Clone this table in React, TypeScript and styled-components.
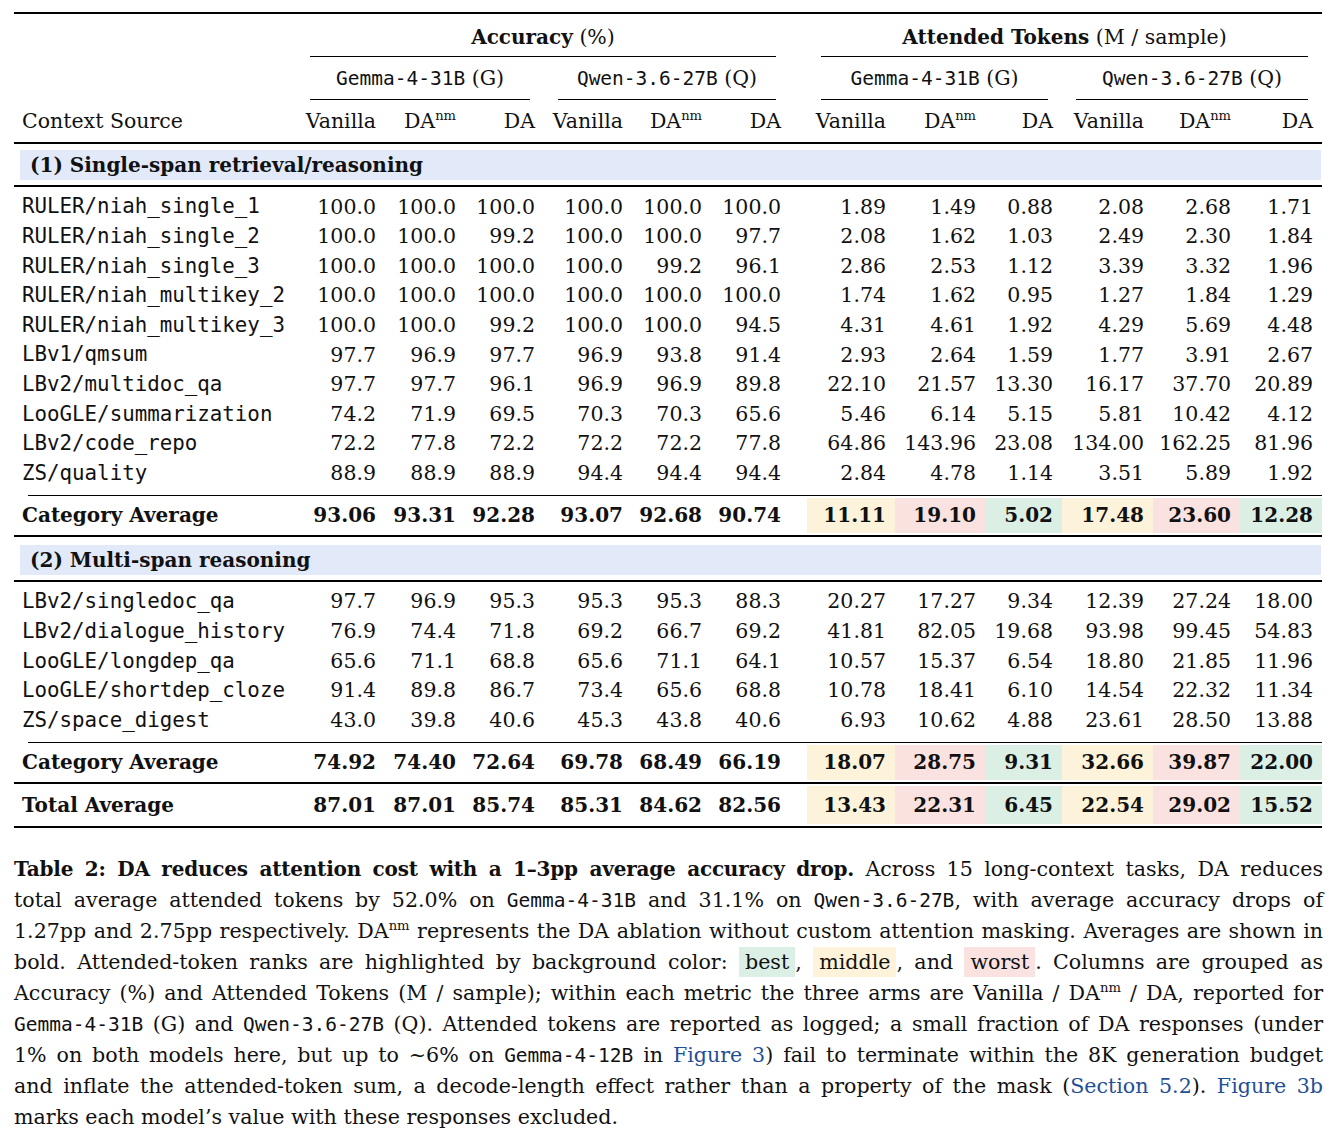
import styled, { createGlobalStyle, css } from "styled-components";

type Tone = "best" | "mid" | "worst";

const tones: Record<Tone, string> = {
  best: "#dcefe5",
  mid: "#fdf3da",
  worst: "#fae2e0",
};

// order of the attended-token ranks: Vanilla / DA^nm / DA, twice
const ranks: Tone[] = ["mid", "worst", "best", "mid", "worst", "best"];

const colWidths = [282, 89, 80, 79, 88, 79, 79, 17, 88, 90, 77, 91, 87, 82];

type Row = { label: string; acc: string[]; att: string[] };

const singleSpan: Row[] = [
  { label: "RULER/niah_single_1", acc: ["100.0", "100.0", "100.0", "100.0", "100.0", "100.0"], att: ["1.89", "1.49", "0.88", "2.08", "2.68", "1.71"] },
  { label: "RULER/niah_single_2", acc: ["100.0", "100.0", "99.2", "100.0", "100.0", "97.7"], att: ["2.08", "1.62", "1.03", "2.49", "2.30", "1.84"] },
  { label: "RULER/niah_single_3", acc: ["100.0", "100.0", "100.0", "100.0", "99.2", "96.1"], att: ["2.86", "2.53", "1.12", "3.39", "3.32", "1.96"] },
  { label: "RULER/niah_multikey_2", acc: ["100.0", "100.0", "100.0", "100.0", "100.0", "100.0"], att: ["1.74", "1.62", "0.95", "1.27", "1.84", "1.29"] },
  { label: "RULER/niah_multikey_3", acc: ["100.0", "100.0", "99.2", "100.0", "100.0", "94.5"], att: ["4.31", "4.61", "1.92", "4.29", "5.69", "4.48"] },
  { label: "LBv1/qmsum", acc: ["97.7", "96.9", "97.7", "96.9", "93.8", "91.4"], att: ["2.93", "2.64", "1.59", "1.77", "3.91", "2.67"] },
  { label: "LBv2/multidoc_qa", acc: ["97.7", "97.7", "96.1", "96.9", "96.9", "89.8"], att: ["22.10", "21.57", "13.30", "16.17", "37.70", "20.89"] },
  { label: "LooGLE/summarization", acc: ["74.2", "71.9", "69.5", "70.3", "70.3", "65.6"], att: ["5.46", "6.14", "5.15", "5.81", "10.42", "4.12"] },
  { label: "LBv2/code_repo", acc: ["72.2", "77.8", "72.2", "72.2", "72.2", "77.8"], att: ["64.86", "143.96", "23.08", "134.00", "162.25", "81.96"] },
  { label: "ZS/quality", acc: ["88.9", "88.9", "88.9", "94.4", "94.4", "94.4"], att: ["2.84", "4.78", "1.14", "3.51", "5.89", "1.92"] },
];

const multiSpan: Row[] = [
  { label: "LBv2/singledoc_qa", acc: ["97.7", "96.9", "95.3", "95.3", "95.3", "88.3"], att: ["20.27", "17.27", "9.34", "12.39", "27.24", "18.00"] },
  { label: "LBv2/dialogue_history", acc: ["76.9", "74.4", "71.8", "69.2", "66.7", "69.2"], att: ["41.81", "82.05", "19.68", "93.98", "99.45", "54.83"] },
  { label: "LooGLE/longdep_qa", acc: ["65.6", "71.1", "68.8", "65.6", "71.1", "64.1"], att: ["10.57", "15.37", "6.54", "18.80", "21.85", "11.96"] },
  { label: "LooGLE/shortdep_cloze", acc: ["91.4", "89.8", "86.7", "73.4", "65.6", "68.8"], att: ["10.78", "18.41", "6.10", "14.54", "22.32", "11.34"] },
  { label: "ZS/space_digest", acc: ["43.0", "39.8", "40.6", "45.3", "43.8", "40.6"], att: ["6.93", "10.62", "4.88", "23.61", "28.50", "13.88"] },
];

const catAvg1: Row = { label: "Category Average", acc: ["93.06", "93.31", "92.28", "93.07", "92.68", "90.74"], att: ["11.11", "19.10", "5.02", "17.48", "23.60", "12.28"] };
const catAvg2: Row = { label: "Category Average", acc: ["74.92", "74.40", "72.64", "69.78", "68.49", "66.19"], att: ["18.07", "28.75", "9.31", "32.66", "39.87", "22.00"] };
const totalAvg: Row = { label: "Total Average", acc: ["87.01", "87.01", "85.74", "85.31", "84.62", "82.56"], att: ["13.43", "22.31", "6.45", "22.54", "29.02", "15.52"] };

const GlobalStyle = createGlobalStyle`
  html, body {
    margin: 0;
    padding: 0;
    background: #fff;
  }
  body {
    font-family: "DejaVu Serif", "Liberation Serif", serif;
    color: #111;
  }
`;

const Page = styled.div`
  width: 1333px;
  padding: 12px 10px 0 14px;
  box-sizing: border-box;
`;

const Table = styled.table`
  width: 1308px;
  border-collapse: collapse;
  border-spacing: 0;
  table-layout: fixed;
  font-size: 20.5px;
  line-height: 1;

  td,
  th {
    padding: 0;
  }
`;

const RuleLine = styled.div<{ $w: number; $inset: number; $gap: number }>`
  height: ${(p) => p.$w}px;
  margin-left: ${(p) => p.$inset}px;
  margin-bottom: ${(p) => p.$gap}px;
  background: #000;
`;

const HeadRow = styled.tr<{ $h: number }>`
  height: ${(p) => p.$h}px;
`;

const GroupHead = styled.th<{ $rule?: boolean; $shift?: number }>`
  position: relative;
  text-align: center;
  font-weight: 400;
  vertical-align: middle;
  padding-top: ${(p) => p.$shift ?? 0}px !important;
  white-space: nowrap;

  ${(p) =>
    p.$rule &&
    css`
      &::after {
        content: "";
        position: absolute;
        left: 14px;
        right: 14px;
        bottom: 0;
        height: 1px;
        background: #000;
      }
    `}
`;

const Strong = styled.b<{ $caption?: boolean }>`
  font-weight: 700;
  font-size: 20px;
  letter-spacing: ${(p) => (p.$caption ? "-0.2px" : "0")};
`;

const Code = styled.span<{ $size?: number }>`
  font-family: "DejaVu Sans Mono", "Liberation Mono", monospace;
  font-size: ${(p) => p.$size ?? 19.5}px;
`;

const ColHead = styled.th<{ $left?: boolean }>`
  font-weight: 400;
  text-align: ${(p) => (p.$left ? "left" : "right")};
  padding: ${(p) => (p.$left ? "0 0 0 8px" : "0 9px 0 0")} !important;
  white-space: nowrap;
`;

const Sup = styled.sup`
  font-size: 0.64em;
  vertical-align: 0;
  position: relative;
  top: -0.6em;
  line-height: 0;
`;

const BandCell = styled.td<{ $top: number; $bottom: number }>`
  padding: ${(p) => p.$top}px 1px ${(p) => p.$bottom}px 6px !important;
`;

const Band = styled.div`
  height: 30px;
  line-height: 30px;
  padding-left: 10px;
  background: #e2eafa;
  font-weight: 700;
  font-size: 20px;
  white-space: nowrap;
`;

const DataRow = styled.tr<{ $h: number; $bold?: boolean }>`
  height: ${(p) => p.$h}px;

  ${(p) =>
    p.$bold &&
    css`
      font-weight: 700;
      font-size: 20px;
    `}
`;

const Label = styled.td<{ $mono?: boolean }>`
  padding-left: 8px !important;
  white-space: nowrap;
  ${(p) =>
    p.$mono &&
    css`
      font-family: "DejaVu Sans Mono", "Liberation Mono", monospace;
      font-size: 20.8px;
    `}
`;

const Num = styled.td<{ $tone?: Tone }>`
  text-align: right;
  padding-right: 9px !important;
  white-space: nowrap;

  ${(p) =>
    p.$tone &&
    css`
      background: ${tones[p.$tone]};
      box-shadow: inset 0 2px 0 #fff, inset 0 -2px 0 #fff;
    `}
`;

const Caption = styled.div`
  width: 1309px;
  margin-top: 26px;
  font-size: 20.6px;
  line-height: 31px;
`;

const Line = styled.div<{ $last?: boolean }>`
  text-align: justify;
  text-align-last: ${(p) => (p.$last ? "left" : "justify")};
`;

const Swatch = styled.span<{ $tone: Tone }>`
  display: inline-block;
  padding: 0 6px;
  line-height: 30px;
  background: ${(p) => tones[p.$tone]};
`;

const Link = styled.span`
  color: #1f4f96;
`;

function Rule({ w = 2, inset = 0, gap = 0 }: { w?: number; inset?: number; gap?: number }) {
  return (
    <tr>
      <td colSpan={14}>
        <RuleLine $w={w} $inset={inset} $gap={gap} />
      </td>
    </tr>
  );
}

function DAnm() {
  return (
    <>
      DA<Sup>nm</Sup>
    </>
  );
}

function DataLine({ row, h, bold, ranked }: { row: Row; h: number; bold?: boolean; ranked?: boolean }) {
  return (
    <DataRow $h={h} $bold={bold}>
      <Label $mono={!bold}>{row.label}</Label>
      {row.acc.map((v, i) => (
        <Num key={"a" + i}>{v}</Num>
      ))}
      <td />
      {row.att.map((v, i) => (
        <Num key={"t" + i} $tone={ranked ? ranks[i] : undefined}>
          {v}
        </Num>
      ))}
    </DataRow>
  );
}

function ModelHeads() {
  return (
    <>
      <GroupHead colSpan={3} $rule>
        <Code>Gemma-4-31B</Code> (G)
      </GroupHead>
      <GroupHead colSpan={3} $rule>
        <Code>Qwen-3.6-27B</Code> (Q)
      </GroupHead>
    </>
  );
}

function ArmHeads() {
  return (
    <>
      <ColHead>Vanilla</ColHead>
      <ColHead>
        <DAnm />
      </ColHead>
      <ColHead>DA</ColHead>
    </>
  );
}

export default function App() {
  return (
    <Page>
      <GlobalStyle />
      <Table>
        <colgroup>
          {colWidths.map((w, i) => (
            <col key={i} style={{ width: w }} />
          ))}
        </colgroup>
        <tbody>
          <Rule w={2} />
          <HeadRow $h={43}>
            <td />
            <GroupHead colSpan={6} $rule $shift={3}>
              <Strong>Accuracy</Strong> (%)
            </GroupHead>
            <td />
            <GroupHead colSpan={6} $rule $shift={3}>
              <Strong>Attended Tokens</Strong> (M / sample)
            </GroupHead>
          </HeadRow>
          <HeadRow $h={43}>
            <td />
            <ModelHeads />
            <td />
            <ModelHeads />
          </HeadRow>
          <HeadRow $h={42}>
            <ColHead $left>Context Source</ColHead>
            <ArmHeads />
            <ArmHeads />
            <td />
            <ArmHeads />
            <ArmHeads />
          </HeadRow>
          <Rule w={2} />
          <tr>
            <BandCell colSpan={14} $top={6} $bottom={5}>
              <Band>(1) Single-span retrieval/reasoning</Band>
            </BandCell>
          </tr>
          <Rule w={2} gap={5} />
          {singleSpan.map((r) => (
            <DataLine key={r.label} row={r} h={29.6} />
          ))}
          <tr>
            <td colSpan={14} style={{ height: 7 }} />
          </tr>
          <Rule w={1} inset={14} />
          <DataLine row={catAvg1} h={39} bold ranked />
          <Rule w={2} />
          <tr>
            <BandCell colSpan={14} $top={8} $bottom={5}>
              <Band>(2) Multi-span reasoning</Band>
            </BandCell>
          </tr>
          <Rule w={2} gap={5} />
          {multiSpan.map((r) => (
            <DataLine key={r.label} row={r} h={29.6} />
          ))}
          <tr>
            <td colSpan={14} style={{ height: 7 }} />
          </tr>
          <Rule w={1} inset={14} />
          <DataLine row={catAvg2} h={39} bold ranked />
          <Rule w={2} />
          <DataLine row={totalAvg} h={42} bold ranked />
          <Rule w={2} />
        </tbody>
      </Table>

      <Caption>
        <Line>
          <Strong $caption>Table 2: DA reduces attention cost with a 1–3pp average accuracy drop.</Strong> Across 15
          long-context tasks, DA reduces
        </Line>
        <Line>
          total average attended tokens by 52.0% on <Code>Gemma-4-31B</Code> and 31.1% on <Code>Qwen-3.6-27B</Code>,
          with average accuracy drops of
        </Line>
        <Line>
          1.27pp and 2.75pp respectively. <DAnm /> represents the DA ablation without custom attention masking.
          Averages are shown in
        </Line>
        <Line>
          bold. Attended-token ranks are highlighted by background color: <Swatch $tone="best">best</Swatch>,{" "}
          <Swatch $tone="mid">middle</Swatch>, and <Swatch $tone="worst">worst</Swatch>. Columns are grouped as
        </Line>
        <Line>
          Accuracy (%) and Attended Tokens (M / sample); within each metric the three arms are Vanilla / <DAnm /> /
          DA, reported for
        </Line>
        <Line>
          <Code>Gemma-4-31B</Code> (G) and <Code>Qwen-3.6-27B</Code> (Q). Attended tokens are reported as logged; a
          small fraction of DA responses (under
        </Line>
        <Line>
          1% on both models here, but up to ∼6% on <Code>Gemma-4-12B</Code> in <Link>Figure 3</Link>) fail to
          terminate within the 8K generation budget
        </Line>
        <Line>
          and inflate the attended-token sum, a decode-length effect rather than a property of the mask (
          <Link>Section 5.2</Link>). <Link>Figure 3b</Link>
        </Line>
        <Line $last>marks each model’s value with these responses excluded.</Line>
      </Caption>
    </Page>
  );
}
